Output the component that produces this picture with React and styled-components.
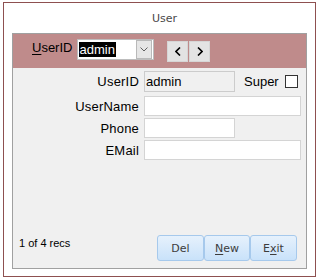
import styled, { createGlobalStyle } from 'styled-components'

const Global = createGlobalStyle`
  body {
    margin: 0;
    background: #fff;
    font-family: "Liberation Sans", Arial, sans-serif;
  }
`

const Window = styled.div`
  box-sizing: border-box;
  margin: 2px 0 0 3px;
  width: 313px;
  height: 275px;
  border: 1px solid #8e5050;
  background: #fff;
  display: flex;
  flex-direction: column;
`

const Title = styled.div`
  height: 30px;
  display: flex;
  align-items: center;
  justify-content: center;
  padding-left: 10px;
  font-family: "DejaVu Sans", sans-serif;
  font-size: 11px;
  color: #4a4a4a;
`

const Panel = styled.div`
  box-sizing: border-box;
  margin-left: 8px;
  width: 295px;
  height: 236px;
  border: 1px solid #a0a0a0;
  background: #f0f0f0;
  display: flex;
  flex-direction: column;
`

const Header = styled.div`
  height: 34px;
  box-sizing: border-box;
  background: #bf8b8b;
  display: flex;
  align-items: flex-start;
  padding: 5px 0 0 19px;
`

const Label = styled.span`
  font-size: 13px;
  line-height: 15px;
  color: #000;
  margin-top: ${p => p.$top || 0}px;
`

const Key = styled.span`
  text-decoration: underline;
  text-decoration-thickness: 1px;
  text-underline-offset: 2px;
`

const Combo = styled.div`
  box-sizing: border-box;
  margin-left: 5px;
  width: 77px;
  height: 21px;
  border: 1px solid #bdbdbd;
  background: #fff;
  display: flex;
  align-items: center;
  padding: 0 1px 0 1px;
`

const Selected = styled.span`
  background: #000;
  color: #fff;
  font-size: 13px;
  line-height: 15px;
  padding-right: 1px;
`

const DropButton = styled.div`
  box-sizing: border-box;
  margin-left: auto;
  width: 16px;
  height: 19px;
  border: 1px solid #b9b9b9;
  background: #e6e6e6;
  display: flex;
  align-items: center;
  justify-content: center;
`

const NavGroup = styled.div`
  display: flex;
  gap: 1px;
  margin: 2px 0 0 13px;
`

const NavButton = styled.button`
  box-sizing: border-box;
  width: 21px;
  height: 21px;
  padding: 0;
  border: 1px solid #d6d6d6;
  background: #e3e3e3;
  display: flex;
  align-items: center;
  justify-content: center;
`

const Body = styled.div`
  flex: 1;
  display: flex;
  flex-direction: column;
`

const Row = styled.div`
  display: flex;
  align-items: center;
  margin-top: ${p => p.$top}px;
`

const FieldLabel = styled.span`
  width: 126px;
  margin-right: 5px;
  text-align: right;
  font-size: 13px;
  letter-spacing: 0.2px;
  color: #000;
`

const Field = styled.div`
  box-sizing: border-box;
  width: ${p => (p.$wide ? 157 : 91)}px;
  height: ${p => p.$h || 20}px;
  border: 1px solid ${p => (p.$disabled ? '#cccccc' : '#d4d4d4')};
  background: ${p => (p.$disabled ? '#f0f0f0' : '#fff')};
  font-size: 13px;
  display: flex;
  align-items: center;
  padding-left: 1px;
  color: #000;
`

const Super = styled.span`
  margin-left: 9px;
  font-size: 13px;
  color: #000;
`

const Check = styled.span`
  box-sizing: border-box;
  margin-left: 6px;
  width: 13px;
  height: 13px;
  border: 1px solid #333;
  background: #fff;
`

const Footer = styled.div`
  margin-top: auto;
  display: flex;
  align-items: flex-start;
  padding: 0 9px 7px 6px;
`

const Recs = styled.span`
  font-size: 11px;
  line-height: 14px;
  margin-top: 1px;
  color: #000;
`

const Buttons = styled.div`
  margin-left: auto;
  display: flex;
`

const Button = styled.button`
  box-sizing: border-box;
  width: ${p => p.$w}px;
  height: 26px;
  padding: 0;
  border: 1px solid #a6c9ec;
  border-radius: 3px;
  background: linear-gradient(#e6f1fc, #c9e2fa);
  font-family: "DejaVu Sans", sans-serif;
  font-size: 11px;
  color: #3c3c3c;
`

const Arrow = ({ dir }) => (
  <svg width="6" height="9" viewBox="0 0 6 9">
    <path
      d={dir === 'left' ? 'M5 0.5 L1 4.5 L5 8.5' : 'M1 0.5 L5 4.5 L1 8.5'}
      fill="none"
      stroke="#000"
      strokeWidth="1.6"
    />
  </svg>
)

export default function App() {
  return (
    <>
      <Global />
      <Window>
        <Title>User</Title>
        <Panel>
          <Header>
            <Label $top={1}><Key>U</Key>serID</Label>
            <Combo>
              <Selected>admin</Selected>
              <DropButton>
                <svg width="8" height="5" viewBox="0 0 8 5">
                  <path d="M0.5 0.5 L4 4 L7.5 0.5" fill="none" stroke="#606060" strokeWidth="1" />
                </svg>
              </DropButton>
            </Combo>
            <NavGroup>
              <NavButton><Arrow dir="left" /></NavButton>
              <NavButton><Arrow dir="right" /></NavButton>
            </NavGroup>
          </Header>
          <Body>
            <Row $top={3}>
              <FieldLabel>UserID</FieldLabel>
              <Field $disabled $h={21}>admin</Field>
              <Super>Super</Super>
              <Check />
            </Row>
            <Row $top={4}>
              <FieldLabel>UserName</FieldLabel>
              <Field $wide />
            </Row>
            <Row $top={2}>
              <FieldLabel>Phone</FieldLabel>
              <Field />
            </Row>
            <Row $top={2}>
              <FieldLabel>EMail</FieldLabel>
              <Field $wide />
            </Row>
            <Footer>
              <Recs>1 of 4 recs</Recs>
              <Buttons>
                <Button $w={47}>Del</Button>
                <Button $w={46}><Key>N</Key>ew</Button>
                <Button $w={47}>E<Key>x</Key>it</Button>
              </Buttons>
            </Footer>
          </Body>
        </Panel>
      </Window>
    </>
  )
}
